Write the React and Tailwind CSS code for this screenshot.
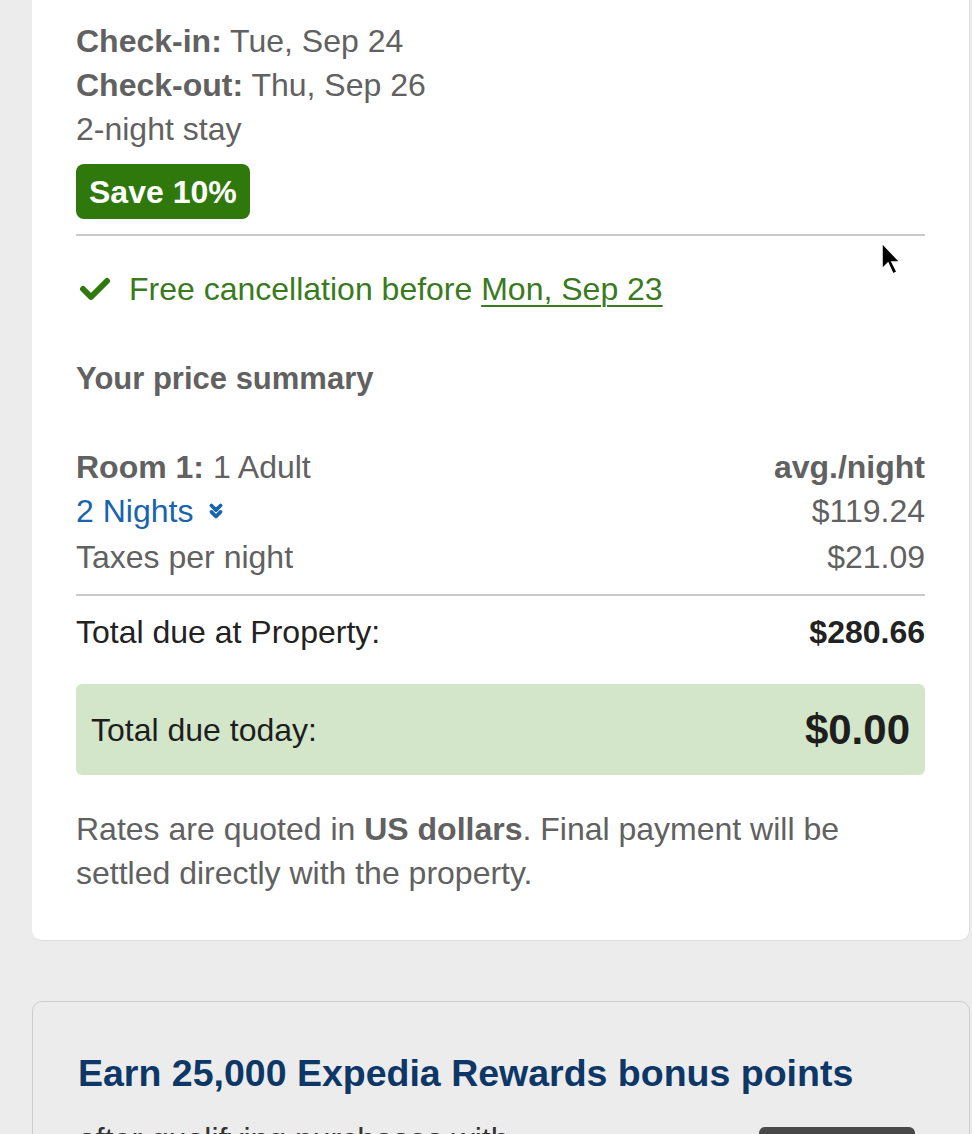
import { ChevronsDown } from 'lucide-react';

export default function App() {
  return (
    <div className="relative h-[1134px] overflow-hidden bg-[#ececec] pl-[32px] pr-[2px] font-['Liberation_Sans',Arial,sans-serif] text-[32px] leading-[44px] text-[#616161]">
      {/* Price summary card */}
      <div className="bg-white rounded-b-[10px] border-r border-b border-[#dedede] pl-[44px] pr-[44px] pt-[19px] pb-[45px]">
        <div>
          <span className="font-bold">Check-in:</span> Tue, Sep 24
        </div>
        <div>
          <span className="font-bold">Check-out:</span> Thu, Sep 26
        </div>
        <div>2-night stay</div>
        <div className="mt-[13px] inline-flex h-[55px] items-center rounded-[8px] bg-[#2f780c] px-[13px] font-bold text-white">
          Save 10%
        </div>
        <div className="mt-[15px] h-[2px] bg-[#c9c9c9]" />

        <div className="mt-[31px] flex items-center gap-[18px] text-[#3a7a1e]">
          <svg className="ml-[3px]" width="32" height="26" viewBox="0 0 32 26">
            <polyline points="4,13 12,21 28,5" fill="none" stroke="#2f780c" strokeWidth="6" strokeLinecap="round" strokeLinejoin="round" />
          </svg>
          <span>
            Free cancellation before <span className="underline underline-offset-[5px] decoration-2">Mon, Sep 23</span>
          </span>
        </div>

        <div className="mt-[46px] text-[31px] font-bold">Your price summary</div>

        <div className="mt-[44px]">
          <div className="flex justify-between">
            <span><span className="font-bold">Room 1:</span> 1 Adult</span>
            <span className="font-bold">avg./night</span>
          </div>
          <div className="flex justify-between">
            <span className="flex items-center gap-[12px] text-[#1a63ad]">
              2 Nights
              <ChevronsDown size={22} strokeWidth={4} />
            </span>
            <span>$119.24</span>
          </div>
          <div className="mt-[2px] flex justify-between">
            <span>Taxes per night</span>
            <span>$21.09</span>
          </div>
        </div>
        <div className="mt-[15px] h-[2px] bg-[#c9c9c9]" />

        <div className="mt-[14px] flex justify-between text-[#222]">
          <span>Total due at Property:</span>
          <span className="font-bold">$280.66</span>
        </div>

        <div className="mt-[30px] flex h-[91px] items-center justify-between rounded-[6px] bg-[#d3e6ca] px-[15px] text-[#1e1e1e]">
          <span>Total due today:</span>
          <span className="text-[42px] font-bold">$0.00</span>
        </div>

        <p className="mt-[32px] pr-[40px]">
          Rates are quoted in <span className="font-bold">US dollars</span>. Final payment will be settled directly with the property.
        </p>
      </div>

      {/* Rewards card */}
      <div className="mt-[60px] rounded-t-[10px] border border-[#cdcdcd] bg-[#ececec] pl-[45px] pr-[54px] pt-[49px]">
        <h2 className="text-[37.5px] font-bold leading-[44px] text-[#0c3767]">
          Earn 25,000 Expedia Rewards bonus points
        </h2>
        <div className="mt-[22px] flex justify-between">
          <p className="text-[#333]">after qualifying purchases with</p>
          <div className="mt-[10px] h-[100px] w-[156px] rounded-[6px] bg-gradient-to-b from-[#4a4a4a] to-[#222]" />
        </div>
      </div>

      {/* cursor */}
      <svg className="absolute left-[880px] top-[241px]" width="24" height="36" viewBox="0 0 24 36">
        <path d="M2 2 L2 28 L8 22 L13 33 L17 31 L12 21 L20 21 Z" fill="#000" stroke="#fff" strokeWidth="1.5" />
      </svg>
    </div>
  );
}
